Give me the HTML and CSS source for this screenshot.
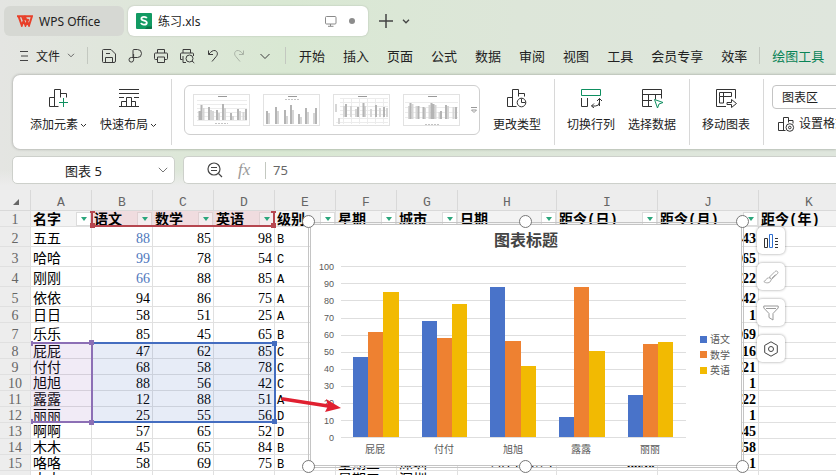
FILE: index.html
```
<!DOCTYPE html>
<html lang="zh-CN">
<head>
    <meta charset="UTF-8">
    <meta name="viewport" content="width=device-width, initial-scale=1.0">
    <title>练习.xls - WPS Office</title>
    <link rel="stylesheet" href="styles.css">
</head>
<body>
    <header class="titlebar">
        <button class="app-tab">
            <svg width="16" height="12" viewBox="0 0 16 12" fill="none" stroke="#e8402a" stroke-width="2"><path d="M0 1.2h15L12 10.5 8 2 4.800 10.500 1.500 1.200M5 1.200 8.500 10.500 11.500 4"/></svg>
            <span>WPS Office</span>
        </button>
        <div class="doc-tab">
            <svg width="16" height="16" viewBox="0 0 16 16"><rect width="16" height="16" rx="1" fill="#129a63"/><path d="M9 16l2-2.500h5V15a1 1 0 0 1-1 1z" fill="#0b7549"/><path d="M10.800 5.300C10.400 4.200 9.300 3.800 8 3.800c-1.500 0-2.600.7-2.600 1.900 0 2.600 5.400 1.300 5.400 4 0 1.200-1.200 2-2.800 2-1.500 0-2.600-.6-2.900-1.800" fill="none" stroke="#fff" stroke-width="1.800"/></svg>
            <span class="doc-name">练习.xls</span>
            <svg width="12" height="11" viewBox="0 0 12 11" fill="none" stroke="#8a8a8a"><rect x=".5" y=".5" width="10.500" height="7.500" rx="1"/><path d="M5.500 8v2M3 10.300h5.500"/></svg>
            <i class="dot"></i>
        </div>
        <button class="plain" aria-label="新建"><svg width="14" height="14" viewBox="0 0 14 14" stroke="#444" stroke-width="1.500"><path d="M7 0v14M0 7h14"/></svg></button>
        <button class="plain" aria-label="标签列表"><svg width="8" height="5" viewBox="0 0 8 5" fill="none" stroke="#444" stroke-width="1.300"><path d="M1 .8l3 3 3-3"/></svg></button>
    </header>

    <nav class="menubar">
        <button class="file-menu">
            <svg width="9" height="12" viewBox="0 0 9 12" stroke="#444"><path d="M0 1.500h8M1 6h7M0 10.500h8"/></svg>
            <span>文件</span>
            <svg width="8" height="5" viewBox="0 0 8 5" fill="none" stroke="#666"><path d="M1 .8l3 3 3-3"/></svg>
        </button>
        <i class="bar"></i>
        <div class="quick">
            <button class="plain" aria-label="保存"><svg width="16" height="16" viewBox="0 0 16 16"><path d="M2.500 1.500H10l4.500 4.500v7a1.500 1.500 0 0 1-1.500 1.500H2.500a1 1 0 0 1-1-1v-11a1 1 0 0 1 1-1zM4.500 14.500V9.500h7v5M5 5.500h4"/></svg></button>
            <button class="plain" aria-label="输出"><svg width="16" height="16" viewBox="0 0 16 16"><path d="M6 10V2.500q0-1 1-1h3.500a3.500 3.500 0 0 1 0 8H4.300a2.300 2.300 0 1 0 2.300 2.300V6"/></svg></button>
            <button class="plain" aria-label="打印"><svg width="16" height="16" viewBox="0 0 16 16"><path d="M4.500 5V1.500h7V5M4 11.500H2.500a1 1 0 0 1-1-1V6a1 1 0 0 1 1-1h11a1 1 0 0 1 1 1v4.500a1 1 0 0 1-1 1H12M4.500 9h7v5.500h-7z"/></svg></button>
            <button class="plain" aria-label="打印预览"><svg width="16" height="16" viewBox="0 0 16 16"><path d="M4 5V1.500h7.500V5M3.500 11.500h-2V6a1 1 0 0 1 1-1h11a1 1 0 0 1 1 1v2M4 8v6.500h3M13 13l2.300 2"/><circle cx="10.500" cy="10.500" r="3.500"/></svg></button>
            <button class="plain" aria-label="撤销"><svg width="16" height="16" viewBox="0 0 16 16"><path d="M3.500 2.500v4H8M3.800 6.300C6 3.500 8 2 10.200 2.600c2.600 1 2.800 3.900 1 5.900L7 13.500"/></svg></button>
            <button class="plain off" aria-label="恢复"><svg width="16" height="16" viewBox="0 0 16 16"><path d="M12.500 2.500v4H8M12.200 6.300C10 3.500 8 2 5.800 2.600c-2.600 1-2.800 3.900-1 5.900L9 13.500"/></svg></button>
            <button class="plain" aria-label="更多"><svg width="16" height="16" viewBox="0 0 16 16"><path d="M3.500 6L8 10.500 12.500 6"/></svg></button>
        </div>
        <i class="bar"></i>
        <div class="tabs">
            <a href="#">开始</a>
            <a href="#">插入</a>
            <a href="#">页面</a>
            <a href="#">公式</a>
            <a href="#">数据</a>
            <a href="#">审阅</a>
            <a href="#">视图</a>
            <a href="#">工具</a>
            <a href="#">会员专享</a>
            <a href="#">效率</a>
        </div>
        <i class="bar"></i>
        <a href="#" class="active">绘图工具</a>
    </nav>

    <section class="ribbon">
        <div class="group">
            <button class="tool">
                <svg width="22" height="20" viewBox="0 0 22 20"><path d="M1.500 18.500v-9h5M6.500 18.500v-17h6v8M1.500 18.500h9M12.500 5.500h6v4"/><path class="green" d="M15.500 10v9M11 14.500h9"/></svg>
                <span>添加元素 <svg width="7" height="5" viewBox="0 0 7 5"><path d="M1 1l2.500 2.500L6 1"/></svg></span>
            </button>
            <button class="tool">
                <svg width="22" height="20" viewBox="0 0 22 20"><path d="M1 1.500h20M1 5.500h20M1 9.500h5M16 9.500h5M3.500 18.500v-5h5v5M8.500 18.500v-9h5v9M13.500 13.500h4v5M1 18.500h20"/></svg>
                <span>快速布局 <svg width="7" height="5" viewBox="0 0 7 5"><path d="M1 1l2.500 2.500L6 1"/></svg></span>
            </button>
        </div>
        <div class="group">
            <div class="gallery">
                <svg class="thumb" viewBox="0 0 57 32"><rect x=".5" y=".5" width="56" height="31"/><path class="grid" d="M4 6.500h50M4 10.500h50M4 14.500h50M4 18.500h50M4 22.500h50M4 26.500h50"/><path class="name" d="M25 2.500h9"/><path class="dark" d="M6.500 26v-9M8.500 26V11M16 26V13M24 26V16M30 26V10M38 26V19M45 26V15M53 26V15"/><path class="light" d="M10.500 26V14M18 26V16M20 26V17M26 26V19M32 26V14M40 26V22M47 26V17M50.500 26V18"/><path class="key" d="M22 29.500h13"/></svg>
                <svg class="thumb" viewBox="0 0 57 32"><rect x=".5" y=".5" width="56" height="31"/><path class="name" d="M25 2.500h9"/><path class="dark" d="M4 30V17M13 30V13M22 30V16M28 30V11M36 30V20M43 30V14M53 30V14"/><path class="light" d="M6 30V19M15 30V17M24 30V22M30 30V16M38 30V23M45 30V18M51 30V19"/><path class="key" d="M22 5.500h14"/></svg>
                <svg class="thumb" viewBox="0 0 57 32"><rect x=".5" y=".5" width="56" height="31"/><path class="grid" d="M7 4.500h48M7 8.500h48M7 12.500h48M7 16.500h48M7 20.500h48M7 24.500h48M3 28.500h52M10.500 4v26M18.500 4v26M26.500 4v26M34.500 4v26M42.500 4v26M50.500 4v26"/><path class="name" d="M25 2.500h9"/><path class="light" d="M11 23V12M18 23V12M23 23V15M32 23V12M38 23V15M47 23V14M54 23V14M3 10v8M6 24v6"/><path class="dark" d="M13 23V10M25 23V13M30.500 23V9M43 23V11M51 23V13"/></svg>
                <svg class="thumb" viewBox="0 0 57 32"><rect x=".5" y=".5" width="56" height="31"/><path class="grid" d="M2 8.500h53M2 13.500h53M2 18.500h53M2 23.500h53"/><path class="name" d="M25 2.500h9"/><path class="light" d="M6 25V12M9.500 25V10M13.500 25V12M22 25V14M26.500 25V11M32.500 25V11M36.500 25V18M45 25V12M50.500 25V13"/><path class="dark" d="M7.500 25V9M15.500 25V12M20.500 25V13M28.500 25V9M30.500 25V10M38 25V17M43 25V11M53 25V13"/><path class="key" d="M22 30.500h14"/></svg>
                <svg class="more" width="8" height="6" viewBox="0 0 8 6"><path d="M1 .5h6M1.500 3h5L4 5.500z"/></svg>
            </div>
            <button class="tool">
                <svg width="22" height="20" viewBox="0 0 22 20"><path d="M1.500 18.500v-9h5M6.500 18.500v-17h6v7M1.500 18.500h9M12.500 5.500h6v3"/><circle cx="15.500" cy="14.500" r="4.300"/><path d="M15.500 10.500v4h4"/></svg>
                <span>更改类型</span>
            </button>
        </div>
        <div class="group">
            <button class="tool">
                <svg width="22" height="20" viewBox="0 0 22 20"><path class="green" d="M1.500 1.500h19v6h-19z"/><path d="M1.500 10v8.500h6V10M19.500 18v-7.500M17 13l2.500-2.500L22 13M19.500 14q0 4-4 4h-4M14 15.500L11.500 18l2.500 2"/></svg>
                <span>切换行列</span>
            </button>
            <button class="tool">
                <svg width="22" height="20" viewBox="0 0 22 20"><path d="M11 18.500H1.500v-17h19v9M1.500 6.500h19M1.500 12.500H11M7.500 6.500v12M14.500 6.500v5"/><path class="green" d="M13.500 11.500l8.500 3-4 1.500-1.500 4z"/></svg>
                <span>选择数据</span>
            </button>
        </div>
        <div class="group">
            <button class="tool">
                <svg width="22" height="20" viewBox="0 0 22 20"><path d="M11 18.500H1.500v-17h19v9M4.500 4.500h12v4h-12zM4.500 8.500v6.500h4V4.500M12 14.500h4.500v-3l5 4-5 4v-3H12z"/></svg>
                <span>移动图表</span>
            </button>
        </div>
        <div class="group format">
            <select aria-label="图表元素">
                <option>图表区</option>
                <option>绘图区</option>
            </select>
            <button class="format-btn">
                <svg width="17" height="16" viewBox="0 0 17 16"><path d="M.5 14.500v-8h5M5.500 14.500v-13h5v5M.5 14.500h7M10.500 4.500h4.500v3"/><circle cx="11.800" cy="11.500" r="3.800"/><circle cx="11.800" cy="11.500" r="1.300"/></svg>
                <span>设置格式</span>
            </button>
        </div>
    </section>

    <section class="formula-row">
        <div class="name-box">
            <input type="text" value="图表 5" aria-label="名称框">
            <button class="plain" aria-label="展开"><svg width="10" height="6" viewBox="0 0 10 6" fill="none" stroke="#777"><path d="M.8.8L5 5 9.200.8"/></svg></button>
        </div>
        <div class="formula">
            <svg width="16" height="16" viewBox="0 0 16 16" fill="none" stroke="#444" stroke-width="1.200"><circle cx="7" cy="7" r="6"/><path d="M4 5.500h6M4 8.500h6M11.500 11.500l3.500 3.500"/></svg>
            <span class="fx">fx</span>
            <i class="bar"></i>
            <input type="text" value="75" aria-label="编辑栏">
        </div>
    </section>

    <main class="sheet">
        <table>
            <colgroup>
                <col class="c-head"><col><col><col><col><col><col><col>
                <col class="c-date"><col class="c-wide"><col class="c-wide"><col class="c-wide">
            </colgroup>
            <thead>
                <tr><th class="corner"><i></i></th><th>A</th><th>B</th><th>C</th><th>D</th><th>E</th><th>F</th><th>G</th><th>H</th><th>I</th><th>J</th><th>K</th></tr>
            </thead>
            <tbody>
                <tr class="titles">
                    <th>1</th>
                    <td><div>名字<button aria-label="筛选"></button></div></td>
                    <td class="series"><div>语文<button aria-label="筛选"></button></div></td>
                    <td class="series"><div>数学<button aria-label="筛选"></button></div></td>
                    <td class="series"><div>英语<button aria-label="筛选"></button></div></td>
                    <td><div>级别<button aria-label="筛选"></button></div></td>
                    <td><div>星期<button aria-label="筛选"></button></div></td>
                    <td><div>城市<button aria-label="筛选"></button></div></td>
                    <td><div>日期<button aria-label="筛选"></button></div></td>
                    <td><div>距今(日)<button aria-label="筛选"></button></div></td>
                    <td><div>距今(月)<button aria-label="筛选"></button></div></td>
                    <td><div>距今(年)</div></td>
                </tr>
                <tr class="tall"><th>2</th><td>五五</td><td class="n blue">88</td><td class="n">85</td><td class="n">98</td><td class="g">B</td><td></td><td></td><td></td><td></td><td class="n b">43</td><td></td></tr>
                <tr class="tall"><th>3</th><td>哈哈</td><td class="n blue">99</td><td class="n">78</td><td class="n">54</td><td class="g">C</td><td></td><td></td><td></td><td></td><td class="n b">65</td><td></td></tr>
                <tr class="tall"><th>4</th><td>刚刚</td><td class="n blue">66</td><td class="n">88</td><td class="n">85</td><td class="g">A</td><td></td><td></td><td></td><td></td><td class="n b">22</td><td></td></tr>
                <tr class="tall"><th>5</th><td>依依</td><td class="n">94</td><td class="n">86</td><td class="n">75</td><td class="g">A</td><td></td><td></td><td></td><td></td><td class="n b">42</td><td></td></tr>
                <tr><th>6</th><td>日日</td><td class="n">58</td><td class="n">51</td><td class="n">25</td><td class="g">A</td><td></td><td></td><td></td><td></td><td class="n b">1</td><td></td></tr>
                <tr class="tall"><th>7</th><td>乐乐</td><td class="n">85</td><td class="n">45</td><td class="n">65</td><td class="g">B</td><td></td><td></td><td></td><td></td><td class="n b">69</td><td></td></tr>
                <tr><th>8</th><td>屁屁</td><td class="n">47</td><td class="n">62</td><td class="n">85</td><td class="g">C</td><td></td><td></td><td></td><td></td><td class="n b">16</td><td></td></tr>
                <tr><th>9</th><td>付付</td><td class="n">68</td><td class="n">58</td><td class="n">78</td><td class="g">C</td><td></td><td></td><td></td><td></td><td class="n b">21</td><td></td></tr>
                <tr><th>10</th><td>旭旭</td><td class="n">88</td><td class="n">56</td><td class="n">42</td><td class="g">C</td><td></td><td></td><td></td><td></td><td class="n b">1</td><td></td></tr>
                <tr><th>11</th><td>露露</td><td class="n">12</td><td class="n">88</td><td class="n">51</td><td class="g">A</td><td></td><td></td><td></td><td></td><td class="n b">22</td><td></td></tr>
                <tr><th>12</th><td>丽丽</td><td class="n">25</td><td class="n">55</td><td class="n">56</td><td class="g">D</td><td></td><td></td><td></td><td></td><td class="n b">1</td><td></td></tr>
                <tr><th>13</th><td>啊啊</td><td class="n">57</td><td class="n">65</td><td class="n">52</td><td class="g">D</td><td></td><td></td><td></td><td></td><td class="n b">45</td><td></td></tr>
                <tr><th>14</th><td>木木</td><td class="n">45</td><td class="n">65</td><td class="n">84</td><td class="g">B</td><td></td><td></td><td></td><td></td><td class="n b">58</td><td></td></tr>
                <tr><th>15</th><td>咯咯</td><td class="n">58</td><td class="n">69</td><td class="n">75</td><td class="g">B</td><td>星期三</td><td>深圳</td><td class="n">2014/11/21</td><td class="n b">8850</td><td class="n b">1</td><td></td></tr>
                <tr><th></th><td>太太</td><td></td><td></td><td></td><td></td><td>星期五</td><td>深圳</td><td></td><td></td><td></td><td></td></tr>
            </tbody>
        </table>

        <!-- source ranges of the chart -->
        <div class="range range-series"><i class="tl"></i><i class="tr"></i><i class="bl"></i><i class="br"></i></div>
        <div class="range range-names"><i class="tl"></i><i class="bl"></i></div>
        <div class="range range-values"><i class="tr"></i><i class="br"></i></div>
        <div class="range-join"><i></i><i></i></div>

        <div class="chart">
            <svg width="430" height="240" viewBox="0 0 430 240">
                <text class="chart-title" x="215" y="21">图表标题</text>
                <path class="lines" d="M30 41.500h345M30 58.500h345M30 75.500h345M30 93.500h345M30 110.500h345M30 127.500h345M30 144.500h345M30 161.500h345M30 178.500h345M30 195.500h345M30 212.500h345"/>
                <g class="axis">
                    <text x="23" y="45">100</text>
                    <text x="23" y="62">90</text>
                    <text x="23" y="79">80</text>
                    <text x="23" y="96">70</text>
                    <text x="23" y="113">60</text>
                    <text x="23" y="130">50</text>
                    <text x="23" y="147">40</text>
                    <text x="23" y="164">30</text>
                    <text x="23" y="181">20</text>
                    <text x="23" y="199">10</text>
                    <text x="23" y="216">0</text>
                </g>
                <path class="s1" d="M42 132h15v80H42zM111 96h15v116h-15zM179 62h15v150h-15zM248 192h15v20h-15zM317 170h15v42h-15z"/>
                <path class="s2" d="M57 107h15v105H57zM126 113h15v99h-15zM194 116h16v96h-16zM263 62h15v150h-15zM332 119h15v93h-15z"/>
                <path class="s3" d="M72 67h16v145H72zM141 79h15v133h-15zM210 141h15v71h-15zM278 126h16v86h-16zM347 117h15v95h-15z"/>
                <g class="names">
                    <text x="64" y="228">屁屁</text>
                    <text x="133" y="228">付付</text>
                    <text x="202" y="228">旭旭</text>
                    <text x="270" y="228">露露</text>
                    <text x="339" y="228">丽丽</text>
                </g>
                <path class="s1" d="M389 111h7v7h-7z"/>
                <path class="s2" d="M389 126h7v7h-7z"/>
                <path class="s3" d="M389 142h7v7h-7z"/>
                <g class="legend">
                    <text x="399" y="118">语文</text>
                    <text x="399" y="134">数学</text>
                    <text x="399" y="149">英语</text>
                </g>
            </svg>
            <i class="grip g1"></i><i class="grip g2"></i><i class="grip g3"></i>
            <i class="grip g4"></i><i class="grip g5"></i><i class="grip g6"></i>
        </div>

        <svg class="arrow" width="62" height="18" viewBox="0 0 62 18"><path d="M3 5L48 12" stroke="#e02030" stroke-width="3.500" stroke-linecap="round"/><path d="M46 5l15 9-16 4 3-6z" fill="#e02030"/></svg>

        <div class="side-tools">
            <button aria-label="图表元素"><svg width="16" height="16" viewBox="0 0 16 16"><path stroke="#333" d="M1.500 5.500h3v9h-3zM12 5.500h3M12 8.500h3M12 11.500h3M12 14.500h3"/><path stroke="#2f6fd0" d="M6.500 1.500h3v13h-3z"/></svg></button>
            <button aria-label="图表样式"><svg width="16" height="16" viewBox="0 0 16 16" stroke="#aaa"><path d="M6 8.500l6-6c1.500-1.500 4 .5 2.500 2.200L8.500 10.500zM6 8.500c1.500 0 2.500 1 2.500 2M5.500 9C3 8.500 3.500 12 .8 12.500c1.700 2 6.700 2 7.200-1.500M9 9l3.500-3.500"/></svg></button>
            <button aria-label="图表筛选"><svg width="16" height="16" viewBox="0 0 16 16" stroke="#999"><path d="M.8 1h14.400v2L10 8.500V15l-4-2.500v-4L.8 3zM3 3.500h10"/></svg></button>
            <button aria-label="设置"><svg width="16" height="16" viewBox="0 0 16 16" stroke="#444"><path d="M8 .8l6.300 3.600v7.200L8 15.200l-6.300-3.600V4.400z"/><circle cx="8" cy="8" r="2.500"/></svg></button>
        </div>
    </main>
</body>
</html>
```

FILE: styles.css
```
* {
    margin: 0;
    padding: 0;
    box-sizing: border-box;
}

body {
    display: flex;
    flex-direction: column;
    height: 100vh;
    overflow: hidden;
    font-family: "Noto Sans", "Noto Sans CJK SC", sans-serif;
    font-size: 12px;
    color: #222;
    background: linear-gradient(90deg, #e4e5e2 0, #e0e6dc 12%, #d9e8d3 34%, #dde6d9 62%, #dfe6dd 100%);
}

button {
    border: none;
    background: none;
    font: inherit;
    color: inherit;
    cursor: pointer;
}

button svg {
    display: block;
    flex: none;
}

a {
    color: inherit;
    text-decoration: none;
}

.plain {
    display: flex;
    align-items: center;
    justify-content: center;
}

.bar {
    flex: none;
    width: 1px;
    height: 17px;
    background: #c3c8c0;
}

/* title bar */

.titlebar {
    display: flex;
    align-items: center;
    flex: none;
    padding: 6px 4px 0;
}

.app-tab {
    display: flex;
    align-items: center;
    gap: 6px;
    width: 120px;
    height: 30px;
    padding-left: 13px;
    border-radius: 6px;
    background: #d6d8d3;
}

.doc-tab {
    display: flex;
    align-items: center;
    width: 240px;
    height: 30px;
    margin: 0 11px 0 4px;
    padding: 0 13px 0 8px;
    border-radius: 6px;
    background: #fff;
    box-shadow: 0 0 2px rgba(0, 0, 0, 0.2);
}

.doc-name {
    flex: 1;
    padding-left: 6px;
}

.dot {
    width: 6px;
    height: 6px;
    margin-left: 12px;
    border-radius: 50%;
    background: #8c8c8c;
}

.titlebar .plain + .plain {
    margin-left: 9px;
}

/* menu */

.menubar {
    display: flex;
    align-items: center;
    flex: none;
    height: 39px;
    padding-left: 20px;
    font-size: 13px;
    white-space: nowrap;
}

.file-menu {
    display: flex;
    align-items: center;
    gap: 7px;
    margin-right: 12px;
    font-size: 12px;
}

.quick {
    display: flex;
    gap: 10px;
    margin: 0 12px 0 13px;
}

.quick svg {
    fill: none;
    stroke: #3c3c3c;
}

.quick .off {
    opacity: 0.3;
}

.tabs {
    display: flex;
    gap: 18px;
    margin: 0 12px 0 13px;
}

.active {
    margin-left: 12px;
    color: #0a8457;
}

/* ribbon */

.ribbon {
    display: flex;
    flex: none;
    height: 74px;
    margin-left: 13px;
    padding: 4px 0;
    border-radius: 7px 0 0 7px;
    background: #fff;
    box-shadow: 0 0 3px rgba(0, 0, 0, 0.35);
    white-space: nowrap;
}

.group {
    display: flex;
    align-items: flex-start;
    flex: none;
    gap: 13px;
    padding: 6px 13px 0 12px;
    border-right: 1px solid #d8d8d8;
}

.group:first-child {
    padding-left: 17px;
    padding-right: 14px;
}

.tool {
    display: flex;
    flex-direction: column;
    align-items: center;
    gap: 8px;
    padding-top: 3px;
    line-height: 18px;
}

.tool svg,
.format-btn svg {
    fill: none;
    stroke: #333;
}

.tool .green {
    stroke: #0e8f60;
}

.tool span {
    display: flex;
    align-items: center;
    gap: 2px;
}

.gallery {
    display: flex;
    align-items: center;
    gap: 13px;
    width: 296px;
    height: 50px;
    padding-left: 8px;
    border: 1px solid #cfcfcf;
    border-radius: 6px;
}

.thumb {
    flex: none;
    width: 57px;
    height: 32px;
    fill: none;
    stroke: #e2e2e2;
}

.thumb .grid {
    stroke: #ececec;
}

.thumb .name {
    stroke: #999;
}

.thumb .dark {
    stroke: #b4b4b4;
    stroke-width: 2;
}

.thumb .light {
    stroke: #d6d6d6;
    stroke-width: 2;
}

.thumb .key {
    stroke: #c4c4c4;
    stroke-dasharray: 2 1;
}

.more {
    flex: none;
    margin-left: -3px;
    fill: none;
    stroke: #999;
}

.format {
    flex: 1 0 120px;
    flex-direction: column;
    gap: 6px;
    padding: 6px 0 0 8px;
    border-right: none;
}

.format select {
    width: 120px;
    height: 24px;
    padding-left: 9px;
    border: 1px solid #c4c4c4;
    border-radius: 4px;
    background: #fff;
    font: inherit;
    color: inherit;
    appearance: none;
}

.format-btn {
    display: flex;
    align-items: center;
    gap: 4px;
    padding-left: 6px;
    line-height: 18px;
}

/* name box and formula bar */

.formula-row {
    display: flex;
    flex: none;
    gap: 8px;
    padding: 7px 0 6px 12px;
    background: linear-gradient(rgba(236, 236, 236, 0) 50%, #ececec 90%);
}

.name-box,
.formula {
    display: flex;
    align-items: center;
    height: 28px;
    border: 1px solid #cdd0cb;
    border-radius: 5px;
    background: #fff;
}

.name-box {
    width: 163px;
    padding-right: 6px;
}

.name-box input {
    flex: 1;
    min-width: 0;
    padding-right: 4px;
    text-align: center;
}

.formula {
    flex: 1;
    padding-left: 23px;
    border-right: none;
    border-radius: 5px 0 0 5px;
}

.formula-row input {
    border: none;
    outline: none;
    background: none;
    font-family: inherit;
    font-size: 13px;
    color: #222;
}

.formula input {
    flex: 1;
    min-width: 0;
    padding-left: 7px;
    color: #666;
}

.fx {
    width: 27px;
    margin-left: 15px;
    font-family: "Liberation Serif", serif;
    font-size: 17px;
    font-style: italic;
    line-height: 20px;
    color: #999;
}

/* sheet */

.sheet {
    position: relative;
    flex: 1;
    min-height: 0;
    overflow: hidden;
    background: #fff;
}

table {
    width: 860px;
    table-layout: fixed;
    border-collapse: separate;
    border-spacing: 0;
    font-family: "Liberation Serif", "Noto Sans CJK SC", serif;
    font-size: 14px;
    line-height: 13px;
    color: #000;
}

col {
    width: 61px;
}

.c-head {
    width: 31px;
}

.c-date {
    width: 99px;
}

.c-wide {
    width: 101px;
}

th,
td {
    height: 16px;
    padding: 2px 2px 0;
    border-right: 1px solid #e0e0e0;
    border-bottom: 1px solid #e0e0e0;
    white-space: nowrap;
}

th {
    background: #ededed;
    font-weight: normal;
    color: #666;
}

thead th {
    height: 21px;
    padding-top: 4px;
    border-color: #d9d9d9;
    font-family: "Liberation Mono", monospace;
    font-size: 13px;
}

td {
    overflow: hidden;
}

.tall td,
.tall th {
    height: 20px;
    padding-top: 4px;
}

.corner i {
    display: block;
    width: 0;
    margin-left: 11px;
    border-left: 6px solid transparent;
    border-bottom: 6px solid #666;
}

.n {
    text-align: right;
}

.b {
    font-weight: bold;
}

.blue {
    color: #4f78bd;
}

.g {
    font-family: "Liberation Mono", monospace;
    font-size: 12px;
    line-height: 10px;
    vertical-align: bottom;
}

.tall .g {
    padding-bottom: 1px;
}

.titles td {
    padding: 0 0 0 2px;
    background: #f3f3f3;
    font-family: "Liberation Mono", "Noto Sans CJK SC", monospace;
    font-weight: bold;
}

.titles .series {
    background: #f0dcdf;
}

.titles div {
    display: flex;
    justify-content: space-between;
    height: 15px;
    line-height: 19px;
}

.titles button {
    width: 15px;
    height: 14px;
    margin-top: 1px;
    border: 1px solid #dcdcdc;
    background: #fff;
}

.titles .series button {
    border-color: #e0d0d2;
    background: #f4ecee;
}

.titles button::before {
    content: "";
    display: block;
    width: 0;
    margin: 0 auto;
    border: 3px solid transparent;
    border-top: 4px solid #2ba67c;
    border-bottom: none;
}

/* highlighted ranges */

.range {
    position: absolute;
}

.range i,
.range-join i {
    position: absolute;
    width: 5px;
    height: 5px;
    background: inherit;
}

.range .tl,
.range .tr {
    top: -3px;
}

.range .bl,
.range .br {
    bottom: -3px;
}

.range .tl,
.range .bl {
    left: -3px;
}

.range .tr,
.range .br {
    right: -3px;
}

.range-series {
    left: 91px;
    top: 21px;
    width: 184px;
    height: 16px;
    border: 2px solid #b6464f;
    border-top: none;
}

.range-series i {
    background: #b6464f;
}

.range-series .tl,
.range-series .tr {
    top: 0;
    height: 2px;
}

.range-names {
    left: 31px;
    top: 152px;
    width: 61px;
    height: 81px;
    border: solid #8c6fb5;
    border-width: 2px 0;
    background: rgba(140, 90, 180, 0.12);
}

.range-names .tl,
.range-names .bl {
    left: 0;
    width: 2px;
    background: #8c6fb5;
}

.range-values {
    left: 92px;
    top: 152px;
    width: 184px;
    height: 81px;
    border: 2px solid #446dc0;
    border-left: none;
    background: rgba(68, 109, 192, 0.13);
}

.range-values i {
    background: #446dc0;
}

.range-join {
    position: absolute;
    left: 91px;
    top: 152px;
    width: 2px;
    height: 81px;
    background: #8c6fb5;
}

.range-join i {
    left: -2px;
    top: -2px;
}

.range-join i + i {
    top: auto;
    bottom: -2px;
}

/* chart */

.chart {
    position: absolute;
    left: 308px;
    top: 32px;
    width: 436px;
    height: 246px;
    border: 3px double #c4c4c4;
    background: #fff;
    background-clip: padding-box;
}

.chart > svg {
    display: block;
}

.chart text {
    font-family: "Liberation Sans", "Noto Sans CJK SC", sans-serif;
    font-size: 10px;
    fill: #595959;
}

.chart .chart-title {
    font-size: 16px;
    font-weight: bold;
    text-anchor: middle;
    fill: #444;
}

.chart .axis text {
    font-size: 9px;
    text-anchor: end;
}

.chart .names text {
    text-anchor: middle;
}

.lines {
    stroke: #dedede;
}

.s1 {
    fill: #4973c9;
}

.s2 {
    fill: #ee8131;
}

.s3 {
    fill: #f2ba02;
}

.grip {
    position: absolute;
    width: 13px;
    height: 13px;
    border: 1px solid #777;
    border-radius: 50%;
    background: #fff;
}

.g1,
.g2,
.g3 {
    top: -10px;
}

.g4,
.g5,
.g6 {
    bottom: -8px;
}

.g1,
.g4 {
    left: -9px;
}

.g2,
.g5 {
    left: calc(50% - 7px);
}

.g3,
.g6 {
    right: -8px;
}

.arrow {
    position: absolute;
    left: 280px;
    top: 204px;
    fill: none;
}

.side-tools {
    position: absolute;
    left: 757px;
    top: 37px;
    display: flex;
    flex-direction: column;
    gap: 9px;
}

.side-tools button {
    display: flex;
    align-items: center;
    justify-content: center;
    width: 28px;
    height: 27px;
    border-radius: 5px;
    background: #fff;
    box-shadow: 0 0 3px rgba(0, 0, 0, 0.4);
}

.side-tools svg {
    fill: none;
}
```
